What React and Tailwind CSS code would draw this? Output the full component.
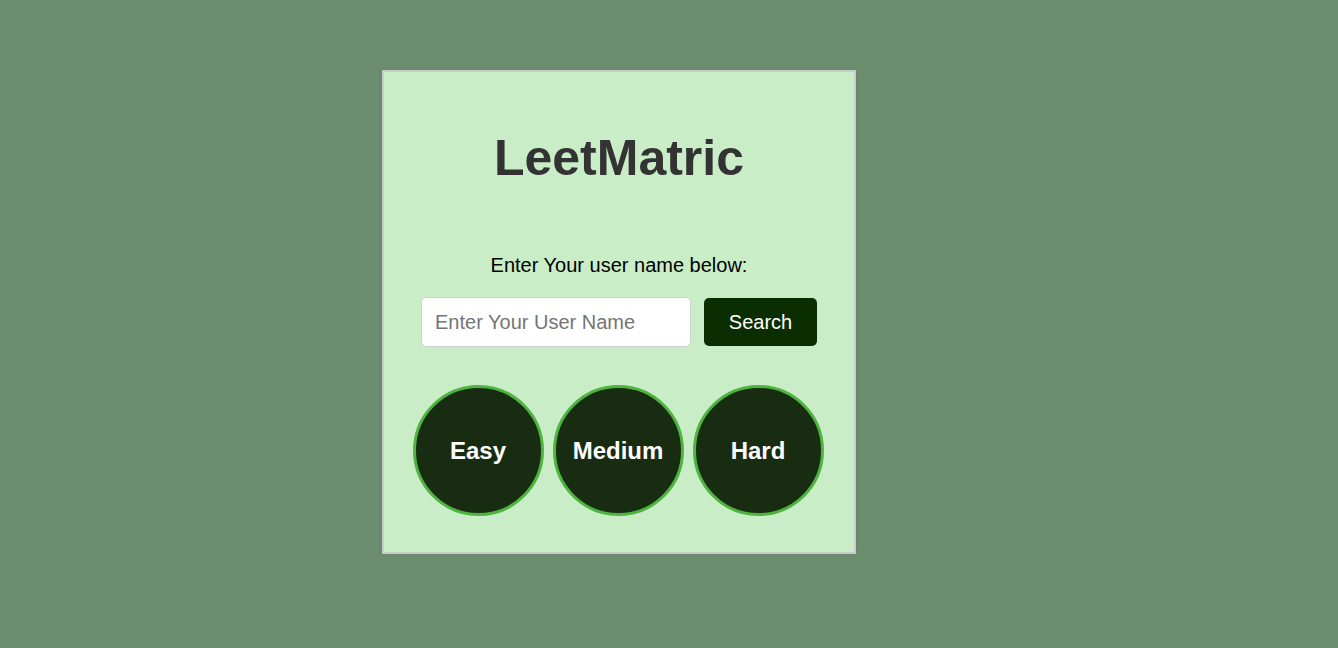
import { useState } from "react";

function LevelCircle({ label }) {
  return (
    <div className="w-[131px] h-[131px] rounded-full border-[3px] border-[#4fb33f] bg-[#182c12] flex items-center justify-center">
      <span className="text-white text-[24px] leading-[28px] font-bold">{label}</span>
    </div>
  );
}

export default function App() {
  const [username, setUsername] = useState("");

  return (
    <div
      className="min-h-[648px] bg-[#6b8e6f] pl-[382px] pt-[70px]"
      style={{ fontFamily: '"Liberation Sans", Arial, sans-serif' }}
    >
      <div className="w-[474px] h-[484px] bg-[#c9edc7] border-2 border-[#cbcbcb] shadow-[0_0_6px_rgba(0,0,0,0.08)] flex flex-col items-center">
        <h1 className="mt-[58px] h-[57px] leading-[57px] text-[50px] font-bold text-[#333333]">
          LeetMatric
        </h1>
        <p className="mt-[67px] h-[23px] leading-[23px] text-[20px] text-black">
          Enter Your user name below:
        </p>
        <div className="mt-[20px] flex items-center gap-[13px]">
          <input
            type="text"
            value={username}
            onChange={(e) => setUsername(e.target.value)}
            placeholder="Enter Your User Name"
            className="w-[270px] h-[50px] rounded-[5px] border border-[#cfcfcf] bg-white px-[13px] text-[20px] text-black placeholder:text-[#757575] outline-none"
          />
          <button className="w-[113px] h-[48px] rounded-[5px] bg-[#0a2e02] text-white text-[20px]">
            Search
          </button>
        </div>
        <div className="mt-[38px] flex gap-[9px] -translate-x-[1px]">
          <LevelCircle label="Easy" />
          <LevelCircle label="Medium" />
          <LevelCircle label="Hard" />
        </div>
      </div>
    </div>
  );
}
